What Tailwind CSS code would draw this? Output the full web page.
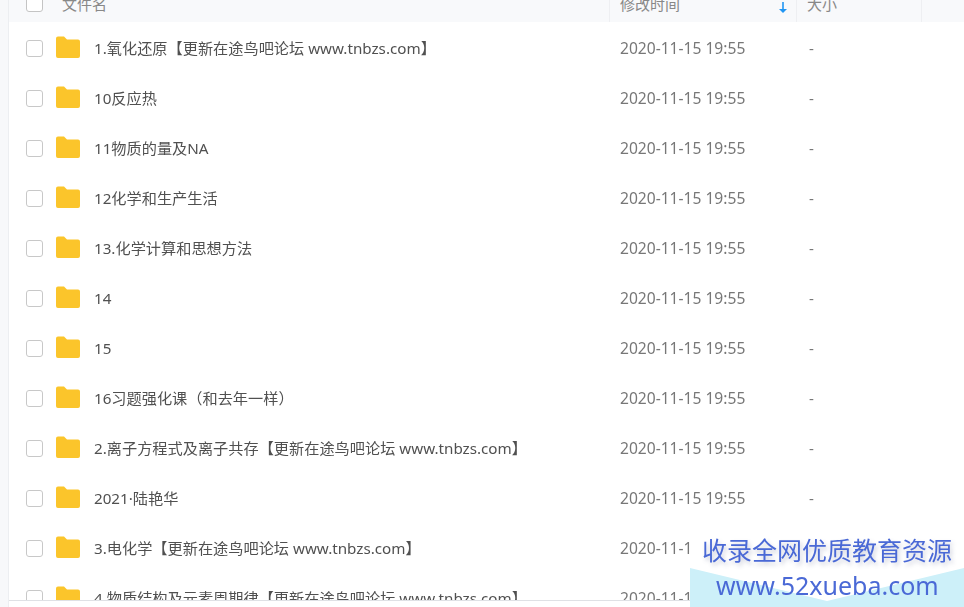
<!DOCTYPE html>
<html lang="zh"><head><meta charset="utf-8"><script src="https://cdn.jsdelivr.net/npm/@tailwindcss/browser@4"></script></head>
<body class="bg-white">
<div class="relative flex w-[964px] h-[607px] overflow-hidden bg-white text-[15.2px] text-[#5f5f5f] font-['Noto_Sans','Noto_Sans_CJK_SC',sans-serif]">
  <div class="w-[9px] shrink-0 bg-[#f7f8fa] border-r border-[#eceef1]"></div>
  <div class="flex-1 flex flex-col min-w-0 blur-[0.35px]">
    <div class="h-[600px] overflow-hidden">
      <div class="h-[22px] overflow-hidden bg-[#f8f9fb]">
        <div class="flex h-[38px] -mt-[15px] items-center text-[#888] text-[15px]">
          <div class="w-[601px] flex items-center pl-[17px] border-r border-[#eeeff2] h-full"><span class="w-[17px] h-[16px] rounded-[3px] border border-[#c4c4c4] bg-white"></span><span class="ml-[19px]">文件名</span></div>
          <div class="w-[187px] flex items-center pl-[10px] border-r border-[#eeeff2] h-full"><span>修改时间</span><svg class="ml-auto mr-[8px] mt-[8px]" width="10" height="12" viewBox="0 0 10 12"><path d="M5 0v8" stroke="#2196f3" stroke-width="1.6"/><path d="M1 7h8l-4 4z" fill="#2196f3"/></svg></div>
          <div class="w-[125px] flex items-center pl-[10px] border-r border-[#eeeff2] h-full"><span>大小</span></div>
        </div>
      </div>
      <div class="pt-px">
        <div class="flex h-[50px] items-center"><span class="ml-[17px] w-[17px] h-[17px] rounded-[3px] border border-[#c8c8c8]"></span><svg class="ml-[12px] -mt-[2px]" width="26" height="23" viewBox="0 0 26 23"><path d="M1 2.500a2 2 0 0 1 2-2h6l3 3h11a2 2 0 0 1 2 2v14.500a2 2 0 0 1-2 2H3a2 2 0 0 1-2-2z" fill="#fbc52b"/></svg><span class="ml-[13px] w-[526px] whitespace-nowrap text-[#505050]">1.氧化还原【更新在途鸟吧论坛 www.tnbzs.com】</span><span class="w-[189px] text-[15.6px] text-[#777] translate-y-[1px]">2020-11-15 19:55</span><span class="text-[#777]">-</span></div>
        <div class="flex h-[50px] items-center"><span class="ml-[17px] w-[17px] h-[17px] rounded-[3px] border border-[#c8c8c8]"></span><svg class="ml-[12px] -mt-[2px]" width="26" height="23" viewBox="0 0 26 23"><path d="M1 2.500a2 2 0 0 1 2-2h6l3 3h11a2 2 0 0 1 2 2v14.500a2 2 0 0 1-2 2H3a2 2 0 0 1-2-2z" fill="#fbc52b"/></svg><span class="ml-[13px] w-[526px] whitespace-nowrap text-[#505050]">10反应热</span><span class="w-[189px] text-[15.6px] text-[#777] translate-y-[1px]">2020-11-15 19:55</span><span class="text-[#777]">-</span></div>
        <div class="flex h-[50px] items-center"><span class="ml-[17px] w-[17px] h-[17px] rounded-[3px] border border-[#c8c8c8]"></span><svg class="ml-[12px] -mt-[2px]" width="26" height="23" viewBox="0 0 26 23"><path d="M1 2.500a2 2 0 0 1 2-2h6l3 3h11a2 2 0 0 1 2 2v14.500a2 2 0 0 1-2 2H3a2 2 0 0 1-2-2z" fill="#fbc52b"/></svg><span class="ml-[13px] w-[526px] whitespace-nowrap text-[#505050]">11物质的量及NA</span><span class="w-[189px] text-[15.6px] text-[#777] translate-y-[1px]">2020-11-15 19:55</span><span class="text-[#777]">-</span></div>
        <div class="flex h-[50px] items-center"><span class="ml-[17px] w-[17px] h-[17px] rounded-[3px] border border-[#c8c8c8]"></span><svg class="ml-[12px] -mt-[2px]" width="26" height="23" viewBox="0 0 26 23"><path d="M1 2.500a2 2 0 0 1 2-2h6l3 3h11a2 2 0 0 1 2 2v14.500a2 2 0 0 1-2 2H3a2 2 0 0 1-2-2z" fill="#fbc52b"/></svg><span class="ml-[13px] w-[526px] whitespace-nowrap text-[#505050]">12化学和生产生活</span><span class="w-[189px] text-[15.6px] text-[#777] translate-y-[1px]">2020-11-15 19:55</span><span class="text-[#777]">-</span></div>
        <div class="flex h-[50px] items-center"><span class="ml-[17px] w-[17px] h-[17px] rounded-[3px] border border-[#c8c8c8]"></span><svg class="ml-[12px] -mt-[2px]" width="26" height="23" viewBox="0 0 26 23"><path d="M1 2.500a2 2 0 0 1 2-2h6l3 3h11a2 2 0 0 1 2 2v14.500a2 2 0 0 1-2 2H3a2 2 0 0 1-2-2z" fill="#fbc52b"/></svg><span class="ml-[13px] w-[526px] whitespace-nowrap text-[#505050]">13.化学计算和思想方法</span><span class="w-[189px] text-[15.6px] text-[#777] translate-y-[1px]">2020-11-15 19:55</span><span class="text-[#777]">-</span></div>
        <div class="flex h-[50px] items-center"><span class="ml-[17px] w-[17px] h-[17px] rounded-[3px] border border-[#c8c8c8]"></span><svg class="ml-[12px] -mt-[2px]" width="26" height="23" viewBox="0 0 26 23"><path d="M1 2.500a2 2 0 0 1 2-2h6l3 3h11a2 2 0 0 1 2 2v14.500a2 2 0 0 1-2 2H3a2 2 0 0 1-2-2z" fill="#fbc52b"/></svg><span class="ml-[13px] w-[526px] whitespace-nowrap text-[#505050]">14</span><span class="w-[189px] text-[15.6px] text-[#777] translate-y-[1px]">2020-11-15 19:55</span><span class="text-[#777]">-</span></div>
        <div class="flex h-[50px] items-center"><span class="ml-[17px] w-[17px] h-[17px] rounded-[3px] border border-[#c8c8c8]"></span><svg class="ml-[12px] -mt-[2px]" width="26" height="23" viewBox="0 0 26 23"><path d="M1 2.500a2 2 0 0 1 2-2h6l3 3h11a2 2 0 0 1 2 2v14.500a2 2 0 0 1-2 2H3a2 2 0 0 1-2-2z" fill="#fbc52b"/></svg><span class="ml-[13px] w-[526px] whitespace-nowrap text-[#505050]">15</span><span class="w-[189px] text-[15.6px] text-[#777] translate-y-[1px]">2020-11-15 19:55</span><span class="text-[#777]">-</span></div>
        <div class="flex h-[50px] items-center"><span class="ml-[17px] w-[17px] h-[17px] rounded-[3px] border border-[#c8c8c8]"></span><svg class="ml-[12px] -mt-[2px]" width="26" height="23" viewBox="0 0 26 23"><path d="M1 2.500a2 2 0 0 1 2-2h6l3 3h11a2 2 0 0 1 2 2v14.500a2 2 0 0 1-2 2H3a2 2 0 0 1-2-2z" fill="#fbc52b"/></svg><span class="ml-[13px] w-[526px] whitespace-nowrap text-[#505050]">16习题强化课（和去年一样）</span><span class="w-[189px] text-[15.6px] text-[#777] translate-y-[1px]">2020-11-15 19:55</span><span class="text-[#777]">-</span></div>
        <div class="flex h-[50px] items-center"><span class="ml-[17px] w-[17px] h-[17px] rounded-[3px] border border-[#c8c8c8]"></span><svg class="ml-[12px] -mt-[2px]" width="26" height="23" viewBox="0 0 26 23"><path d="M1 2.500a2 2 0 0 1 2-2h6l3 3h11a2 2 0 0 1 2 2v14.500a2 2 0 0 1-2 2H3a2 2 0 0 1-2-2z" fill="#fbc52b"/></svg><span class="ml-[13px] w-[526px] whitespace-nowrap text-[#505050]">2.离子方程式及离子共存【更新在途鸟吧论坛 www.tnbzs.com】</span><span class="w-[189px] text-[15.6px] text-[#777] translate-y-[1px]">2020-11-15 19:55</span><span class="text-[#777]">-</span></div>
        <div class="flex h-[50px] items-center"><span class="ml-[17px] w-[17px] h-[17px] rounded-[3px] border border-[#c8c8c8]"></span><svg class="ml-[12px] -mt-[2px]" width="26" height="23" viewBox="0 0 26 23"><path d="M1 2.500a2 2 0 0 1 2-2h6l3 3h11a2 2 0 0 1 2 2v14.500a2 2 0 0 1-2 2H3a2 2 0 0 1-2-2z" fill="#fbc52b"/></svg><span class="ml-[13px] w-[526px] whitespace-nowrap text-[#505050]">2021·陆艳华</span><span class="w-[189px] text-[15.6px] text-[#777] translate-y-[1px]">2020-11-15 19:55</span><span class="text-[#777]">-</span></div>
        <div class="flex h-[50px] items-center"><span class="ml-[17px] w-[17px] h-[17px] rounded-[3px] border border-[#c8c8c8]"></span><svg class="ml-[12px] -mt-[2px]" width="26" height="23" viewBox="0 0 26 23"><path d="M1 2.500a2 2 0 0 1 2-2h6l3 3h11a2 2 0 0 1 2 2v14.500a2 2 0 0 1-2 2H3a2 2 0 0 1-2-2z" fill="#fbc52b"/></svg><span class="ml-[13px] w-[526px] whitespace-nowrap text-[#505050]">3.电化学【更新在途鸟吧论坛 www.tnbzs.com】</span><span class="w-[189px] text-[15.6px] text-[#777] translate-y-[1px]">2020-11-15 19:55</span><span class="text-[#777]">-</span></div>
        <div class="flex h-[50px] items-center"><span class="ml-[17px] w-[17px] h-[17px] rounded-[3px] border border-[#c8c8c8]"></span><svg class="ml-[12px] -mt-[2px]" width="26" height="23" viewBox="0 0 26 23"><path d="M1 2.500a2 2 0 0 1 2-2h6l3 3h11a2 2 0 0 1 2 2v14.500a2 2 0 0 1-2 2H3a2 2 0 0 1-2-2z" fill="#fbc52b"/></svg><span class="ml-[13px] w-[526px] whitespace-nowrap text-[#505050]">4.物质结构及元素周期律【更新在途鸟吧论坛 www.tnbzs.com】</span><span class="w-[189px] text-[15.6px] text-[#777] translate-y-[1px]">2020-11-15 19:55</span><span class="text-[#777]">-</span></div>
      </div>
    </div>
    <div class="h-[7px] border-t border-[#dfe1e5] bg-white"></div>
  </div>
  <div class="absolute left-[690px] top-[535px] w-[274px] h-[72px] bg-white">
    <svg class="absolute left-0 top-[33px]" width="274" height="39" viewBox="0 0 274 39"><path d="M0 0L137 33L274 0V39H0z" fill="#cdf0f9"/></svg>
    <div class="absolute left-[12px] top-[0px] whitespace-nowrap text-[25px] leading-[30px] text-[#4a69d6] [text-shadow:2px_3px_4px_rgba(90,100,140,0.3)]">收录全网优质教育资源</div>
    <div class="absolute left-[26px] top-[34px] whitespace-nowrap text-[25px] leading-[32px] text-[#4a69d6]">www.52xueba.com</div>
  </div>
</div>
</body></html>
